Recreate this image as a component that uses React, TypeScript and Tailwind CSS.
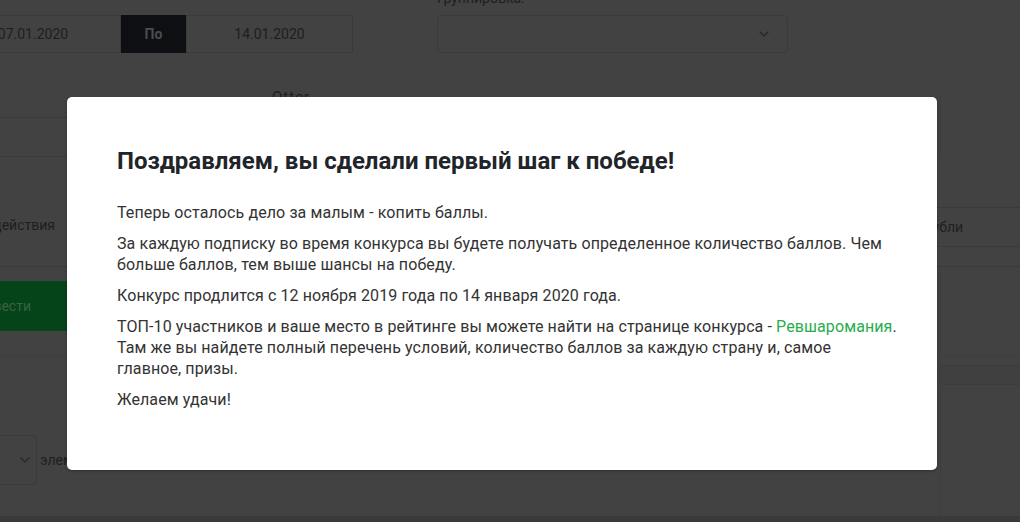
import React from 'react';

const paragraphs: React.ReactNode[] = [
  'Теперь осталось дело за малым - копить баллы.',
  'За каждую подписку во время конкурса вы будете получать определенное количество баллов. Чем больше баллов, тем выше шансы на победу.',
  'Конкурс продлится с 12 ноября 2019 года по 14 января 2020 года.',
  <>
    ТОП-10 участников и ваше место в рейтинге вы можете найти на странице конкурса -{' '}
    <a href="#" className="text-[#27ad4c]">Ревшаромания</a>. Там же вы найдете полный перечень условий,
    количество баллов за каждую страну и, самое главное, призы.
  </>,
  'Желаем удачи!',
];

const Chevron = ({ className }: { className?: string }) => (
  <svg width="10" height="6" viewBox="0 0 10 6" className={className} fill="none">
    <path d="M1 1l4 4 4-4" stroke="currentColor" strokeWidth="1.6" strokeLinecap="round" strokeLinejoin="round" />
  </svg>
);

const App: React.FC = () => {
  return (
    <div className="relative h-[522px] w-[1020px] overflow-hidden bg-[#424242] font-['Roboto',sans-serif] text-[14px] text-[#1e1e1e]">
      {/* dimmed page underneath */}
      <div className="flex h-[97px] items-start">
        <div className="ml-[-55px] mt-[15px] flex h-[38px]">
          <div className="flex w-[176px] items-center justify-center border border-[#3a3a3a]">07.01.2020</div>
          <div className="flex w-[65px] items-center justify-center bg-[#0e0f13] font-bold text-[#4c4c4c]">По</div>
          <div className="flex w-[167px] items-center justify-center border border-[#3a3a3a]">14.01.2020</div>
        </div>
        <div className="ml-[84px] mt-[-12px] flex w-[351px] flex-col">
          <span className="leading-[20px]">Группировка:</span>
          <div className="mt-[7px] flex h-[38px] items-center justify-end rounded-[4px] border border-[#3a3a3a] pr-[18px] text-[#2a2a2a]">
            <Chevron />
          </div>
        </div>
      </div>

      <div className="flex h-[60px] items-start">
        <div className="mt-[20px] h-[40px] w-[250px] border-y border-[#3a3a3a]" />
        <span className="ml-[22px] mt-[-10px] text-[15px] leading-[20px] tracking-[1px]">Otter</span>
        <div className="ml-auto h-full w-[80px] border-l border-[#3d3d3d]" />
      </div>

      <div className="flex h-[110px] border-b border-[#3a3a3a]">
        <div className="flex w-[55px] items-center justify-end whitespace-nowrap pt-[28px]">Тип действия</div>
        <div className="ml-auto flex w-[100px] flex-col border-l border-[#3d3d3d]">
          <div className="mt-[50px] flex h-[40px] items-center border-y border-[#3a3a3a] whitespace-nowrap">
            <span className="ml-[1px]">Дубли</span>
          </div>
        </div>
      </div>

      <div className="flex h-[90px] border-b border-[#3e3e3e]">
        <div className="mt-[14px] flex h-[50px] w-[120px] items-center justify-end bg-[rgb(5,68,24)] pr-[89px] text-[rgb(58,98,68)]">
          <span className="whitespace-nowrap">Провести</span>
        </div>
        <div className="ml-auto h-full w-[80px] border-l border-[#3d3d3d]" />
      </div>

      <div className="flex h-[159px]">
        <div className="flex items-start">
          <div className="ml-[-40px] mt-[78px] flex h-[50px] w-[77px] items-center justify-end rounded-[4px] border border-[#3a3a3a] pr-[6px] text-[#2a2a2a]">
            <Chevron />
          </div>
          <span className="ml-[3px] mt-[93px] leading-[20px]">элементов</span>
        </div>
        <div className="ml-auto flex w-[80px] flex-col border-l border-[#3d3d3d]">
          <div className="mt-[8px] h-[20px] border-y border-[#3d3d3d] bg-[#404040]" />
        </div>
      </div>
      <div className="h-[6px] bg-[#3a3a3a]" />

      {/* modal */}
      <div className="absolute inset-0">
        <div className="ml-[67px] mt-[97px] w-[870px] rounded-[5px] bg-white pb-[50px] pl-[50px] pr-[40px] pt-[50px] shadow-[0_1px_3px_rgba(0,0,0,0.3)]">
          <h2 className="mb-[26px] text-[24px] font-bold leading-[29px] text-[#212529]">
            Поздравляем, вы сделали первый шаг к победе!
          </h2>
          {paragraphs.map((p, i) => (
            <p key={i} className="mb-[10px] text-[16px] leading-[21px] tracking-[0.1px] text-[#333333]">
              {p}
            </p>
          ))}
        </div>
      </div>
    </div>
  );
};

export default App;
